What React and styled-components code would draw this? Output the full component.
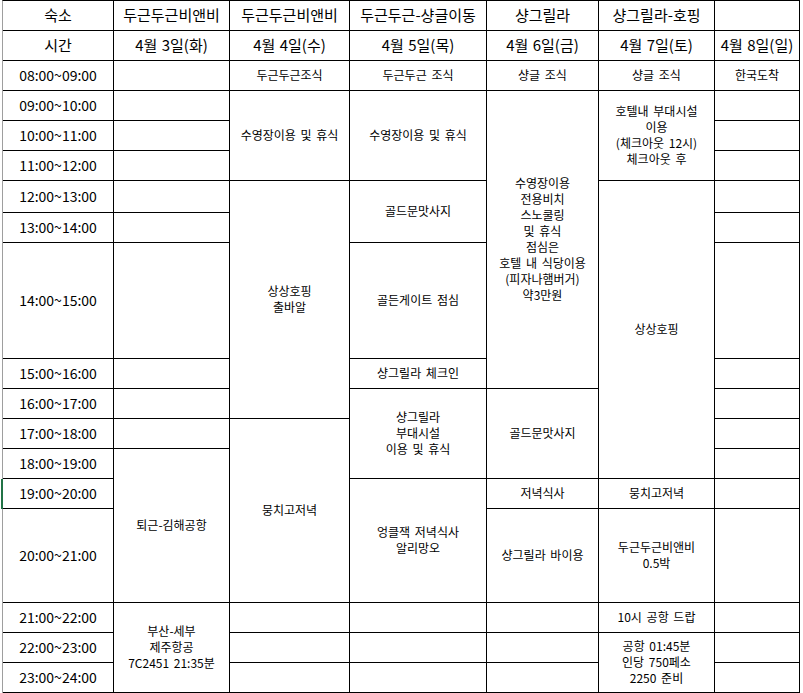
import React from "react";
import styled, { createGlobalStyle } from "styled-components";

const GlobalStyle = createGlobalStyle`
  html, body {
    margin: 0;
    padding: 0;
    background: #ffffff;
  }
  body {
    font-family: "Noto Sans CJK KR", "Noto Sans", sans-serif;
    color: #000;
  }
`;

const Sheet = styled.div`
  display: grid;
  grid-template-columns: 111px 116px 120px 137px 112px 116px 85px;
  grid-template-rows: 30px 30px 30px 30px 30px 30px 32px 30px 116px 30px 30px 30px 30px 30px 94px 30px 30px 30px;
  margin-left: 2px;
  width: max-content;
  border-top: 1px solid #000;
  border-left: 1px solid #9e9e9e;
`;

const Cell = styled.div`
  box-sizing: border-box;
  grid-column: ${(p) => p.$col + 1};
  grid-row: ${(p) => p.$row + 1} / span ${(p) => p.$span || 1};
  border-right: 1px solid #000;
  border-bottom: 1px solid #000;
  display: flex;
  align-items: center;
  justify-content: center;
  text-align: center;
  white-space: pre-line;
  font-size: 12px;
  line-height: 16px;
  word-spacing: 2px;
  padding-bottom: 1px;
`;

const HeadCell = styled(Cell)`
  font-size: 15px;
  line-height: 20px;
  word-spacing: 1px;
`;

const TimeCell = styled(Cell)`
  font-size: 14px;
  word-spacing: 0;
  box-shadow: ${(p) => (p.$selected ? "-2px 0 0 #217346" : "none")};
`;

const hotels = ["숙소", "두근두근비앤비", "두근두근비앤비", "두근두근-샹글이동", "샹그릴라", "샹그릴라-호핑", ""];
const dates = ["시간", "4월 3일(화)", "4월 4일(수)", "4월 5일(목)", "4월 6일(금)", "4월 7일(토)", "4월 8일(일)"];

const times = [
  "08:00~09:00", "09:00~10:00", "10:00~11:00", "11:00~12:00",
  "12:00~13:00", "13:00~14:00", "14:00~15:00", "15:00~16:00",
  "16:00~17:00", "17:00~18:00", "18:00~19:00", "19:00~20:00",
  "20:00~21:00", "21:00~22:00", "22:00~23:00", "23:00~24:00",
];

// [row, span, text] per day column, row 0 = 08:00
const schedule = [
  [
    ...Array.from({ length: 10 }, (_, i) => [i, 1, ""]),
    [10, 3, "퇴근-김해공항"],
    [13, 3, "부산-세부\n제주항공\n7C2451 21:35분"],
  ],
  [
    [0, 1, "두근두근조식"],
    [1, 3, "수영장이용 및 휴식"],
    [4, 5, "상상호핑\n출바알"],
    [9, 4, "뭉치고저녁"],
    [13, 1, ""], [14, 1, ""], [15, 1, ""],
  ],
  [
    [0, 1, "두근두근 조식"],
    [1, 3, "수영장이용 및 휴식"],
    [4, 2, "골드문맛사지"],
    [6, 1, "골든게이트 점심"],
    [7, 1, "샹그릴라 체크인"],
    [8, 3, "샹그릴라\n부대시설\n이용 및 휴식"],
    [11, 2, "엉클잭 저녁식사\n알리망오"],
    [13, 1, ""], [14, 1, ""], [15, 1, ""],
  ],
  [
    [0, 1, "샹글 조식"],
    [1, 7, "수영장이용\n전용비치\n스노쿨링\n및 휴식\n점심은\n호텔 내 식당이용\n(피자나햄버거)\n약3만원"],
    [8, 3, "골드문맛사지"],
    [11, 1, "저녁식사"],
    [12, 1, "샹그릴라 바이용"],
    [13, 1, ""], [14, 1, ""], [15, 1, ""],
  ],
  [
    [0, 1, "샹글 조식"],
    [1, 3, "호텔내 부대시설\n이용\n(체크아웃 12시)\n체크아웃 후"],
    [4, 7, "상상호핑"],
    [11, 1, "뭉치고저녁"],
    [12, 1, "두근두근비앤비\n0.5박"],
    [13, 1, "10시 공항 드랍"],
    [14, 2, "공항 01:45분\n인당 750페소\n2250 준비"],
  ],
  [
    [0, 1, "한국도착"],
    ...Array.from({ length: 15 }, (_, i) => [i + 1, 1, ""]),
  ],
];

export default function App() {
  return (
    <>
      <GlobalStyle />
      <Sheet>
        {hotels.map((h, i) => (
          <HeadCell key={"h" + i} $col={i} $row={0}>{h}</HeadCell>
        ))}
        {dates.map((d, i) => (
          <HeadCell key={"d" + i} $col={i} $row={1}>{d}</HeadCell>
        ))}
        {times.map((t, i) => (
          <TimeCell key={"t" + i} $col={0} $row={i + 2} $selected={i === 11}>{t}</TimeCell>
        ))}
        {schedule.map((day, c) =>
          day.map(([row, span, text]) => (
            <Cell key={c + "-" + row} $col={c + 1} $row={row + 2} $span={span}>
              {text}
            </Cell>
          ))
        )}
      </Sheet>
    </>
  );
}
